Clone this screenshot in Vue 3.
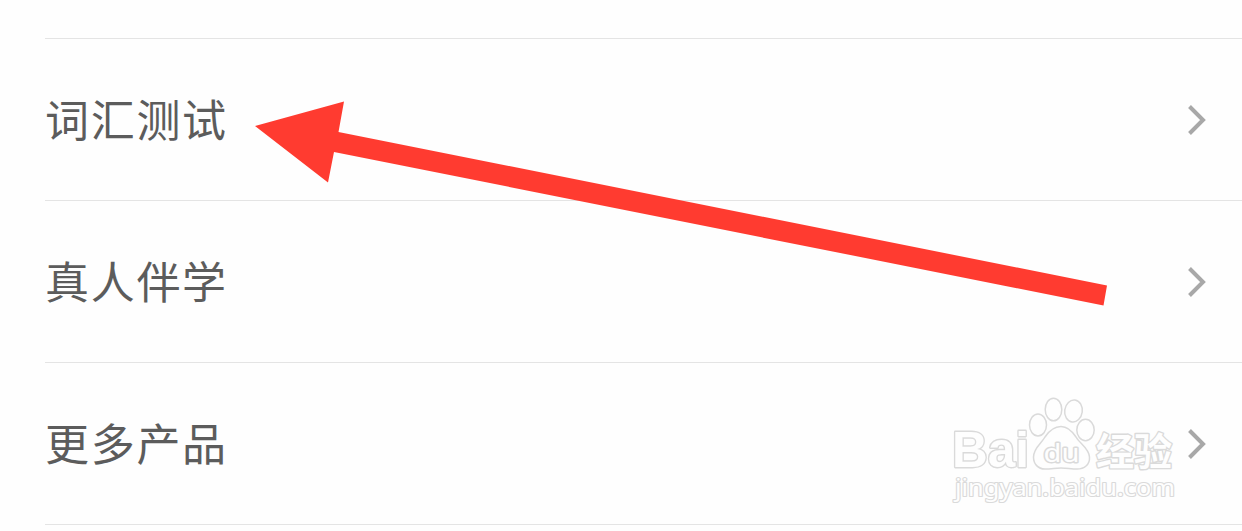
<template>
  <div class="page">
    <ul class="menu-list">
      <li v-for="item in items" :key="item.id" class="menu-item">
        <span class="menu-title">{{ item.title }}</span>
        <svg class="chevron" viewBox="0 0 20 32" width="20" height="32">
          <path d="M2.5 2.5 L16 16 L2.5 29.5" />
        </svg>
      </li>
    </ul>

    <!-- watermark -->
    <svg class="watermark" viewBox="0 0 240 120" width="240" height="120">
      <text class="brand" x="12" y="77" font-size="50" textLength="77" lengthAdjust="spacingAndGlyphs">Bai</text>
      <g class="paw">
        <ellipse cx="98" cy="35" rx="8.5" ry="11" />
        <ellipse cx="113.5" cy="19.5" rx="8.3" ry="11.3" />
        <ellipse cx="133.5" cy="21" rx="8.8" ry="11" transform="rotate(8 133.5 21)" />
        <ellipse cx="145.5" cy="40" rx="8.7" ry="10.7" />
        <path d="M121 36.500 C128 36.500 132 41 136 47 C140 54 149 58 149.500 67 C150 75 144 79 137 79 C131 79 127 78 121 78 C115 78 112 79 105 79 C98 79 93.500 74 93.500 67 C93.500 58 101 54 105 47 C109 41 114 36.500 121 36.500 Z" />
      </g>
      <text class="brand du" x="103.5" y="71.5" font-size="25" textLength="36" lengthAdjust="spacingAndGlyphs">du</text>
      <text class="brand cn" x="156" y="74.500" font-size="38" textLength="76" lengthAdjust="spacingAndGlyphs">经验</text>
      <text class="site" x="15" y="106" font-size="23" textLength="220" lengthAdjust="spacingAndGlyphs">jingyan.baidu.com</text>
    </svg>

    <svg class="arrow" viewBox="0 0 1242 531" width="1242" height="531">
      <polygon points="255,126 344,101.500 338.500,132 1107,285.500 1103.500,305.500 334,152 328,182.500" />
    </svg>
  </div>
</template>

<script setup>
import { ref } from 'vue'

const items = ref([
  { id: 1, title: '词汇测试' },
  { id: 2, title: '真人伴学' },
  { id: 3, title: '更多产品' }
])
</script>

<style>
body {
  background-color: #fefefe;
}
</style>

<style scoped>
.page {
  position: relative;
  height: 531px;
  overflow: hidden;
  background-color: #fefefe;
  font-family: "Liberation Sans", "Noto Sans CJK SC", sans-serif;
}

.menu-list {
  list-style: none;
  margin: 38px 0 0 45px;
  padding: 0;
  border-top: 1px solid #e4e4e4;
}

.menu-item {
  display: flex;
  align-items: center;
  justify-content: space-between;
  box-sizing: border-box;
  height: 162px;
  padding-right: 35px;
  border-bottom: 1px solid #e4e4e4;
}

.menu-title {
  padding-top: 5px;
  font-size: 44px;
  line-height: 60px;
  letter-spacing: 1.7px;
  color: #5c5c5c;
}

.chevron {
  fill: none;
  stroke: #a8a8a8;
  stroke-width: 4;
}

/* red pointer over the list */
.arrow {
  position: absolute;
  top: 0;
  left: 0;
  fill: #ff3b30;
  pointer-events: none;
}

.watermark {
  position: absolute;
  top: 390px;
  left: 940px;
  fill: #fefefe;
  stroke: #dadada;
  stroke-width: 1.5;
  pointer-events: none;
}

.watermark text {
  paint-order: stroke;
  stroke-width: 2.8;
  stroke-linejoin: round;
}

.brand {
  font-family: "Liberation Sans", "Noto Sans CJK SC", sans-serif;
  font-weight: 700;
}

.brand.du {
  font-family: "Noto Sans", sans-serif;
  font-weight: 400;
}

.brand.cn {
  font-family: "Noto Sans CJK SC", sans-serif;
  font-weight: 700;
}

.watermark .site {
  font-family: "Noto Sans", sans-serif;
  font-weight: 400;
  stroke-width: 2.2;
}
</style>
